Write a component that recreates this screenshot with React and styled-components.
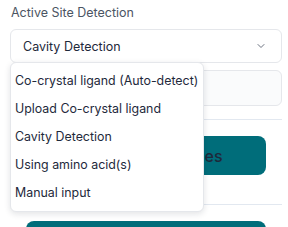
import React from 'react'
import styled, { createGlobalStyle } from 'styled-components'

const Global = createGlobalStyle`
  body {
    margin: 0;
    background: #ffffff;
    font-family: Inter, "Noto Sans", sans-serif;
    color: #1e293b;
  }
`
const Panel = styled.div`
  width: 288px;
  height: 227px;
  overflow: hidden;
  padding: 0 6px 0 10px;
  box-sizing: border-box;
  display: flex;
  flex-direction: column;
  & > * {
    flex-shrink: 0;
  }
`
const Label = styled.div`
  font-size: 12.5px;
  line-height: 16px;
  color: #4b5563;
  margin: 5px 0 0 1px;
`
const SelectWrap = styled.div`
  position: relative;
  margin-top: 8px;
`
const Select = styled.div`
  height: 32px;
  border: 1px solid #e5e7eb;
  border-radius: 6px;
  display: flex;
  align-items: center;
  justify-content: space-between;
  padding: 0 14px 0 12px;
  font-size: 12.5px;
  color: #1e293b;
  background: #fff;
`
const Menu = styled.div`
  position: absolute;
  top: 33px;
  left: 0;
  width: 194px;
  padding: 3px 0 5px;
  background: #fff;
  border: 1px solid #e5e7eb;
  border-radius: 6px;
  box-shadow: 0 2px 6px rgba(15, 23, 42, 0.12);
  box-sizing: border-box;
  z-index: 5;
`
const Item = styled.div`
  height: 28px;
  display: flex;
  align-items: center;
  padding-left: 4px;
  font-size: 12.4px;
  color: #1e293b;
  white-space: nowrap;
`
const Field = styled.div`
  height: 34px;
  margin-top: 7px;
  border: 1px solid #e5e7eb;
  border-radius: 6px;
  background: #fafbfc;
`
const Divider = styled.div`
  height: 1px;
  background: #e2e8f0;
  margin-top: ${p => p.$gap}px;
`
const Button = styled.div`
  height: 39px;
  margin: ${p => p.$gap}px 16px 0 16px;
  border-radius: 8px;
  background: #006d7a;
  display: flex;
  align-items: center;
  justify-content: center;
  font-size: 16px;
  font-weight: 500;
  color: #1e293b;
`

const options = [
  'Co-crystal ligand (Auto-detect)',
  'Upload Co-crystal ligand',
  'Cavity Detection',
  'Using amino acid(s)',
  'Manual input',
]

export default function App() {
  return (
    <Panel>
      <Global />
      <Label>Active Site Detection</Label>
      <SelectWrap>
        <Select>
          <span>Cavity Detection</span>
          <svg width="12" height="12" viewBox="0 0 24 24" fill="none" stroke="#6b7280" strokeWidth="2" strokeLinecap="round" strokeLinejoin="round">
            <path d="m6 9 6 6 6-6" />
          </svg>
        </Select>
        <Menu>
          {options.map(o => <Item key={o}>{o}</Item>)}
        </Menu>
      </SelectWrap>
      <Field />
      <Divider $gap={13} />
      <Button $gap={16}>Generate Molecules</Button>
      <Divider $gap={29} />
      <Button $gap={16}>Run Docking</Button>
    </Panel>
  )
}
